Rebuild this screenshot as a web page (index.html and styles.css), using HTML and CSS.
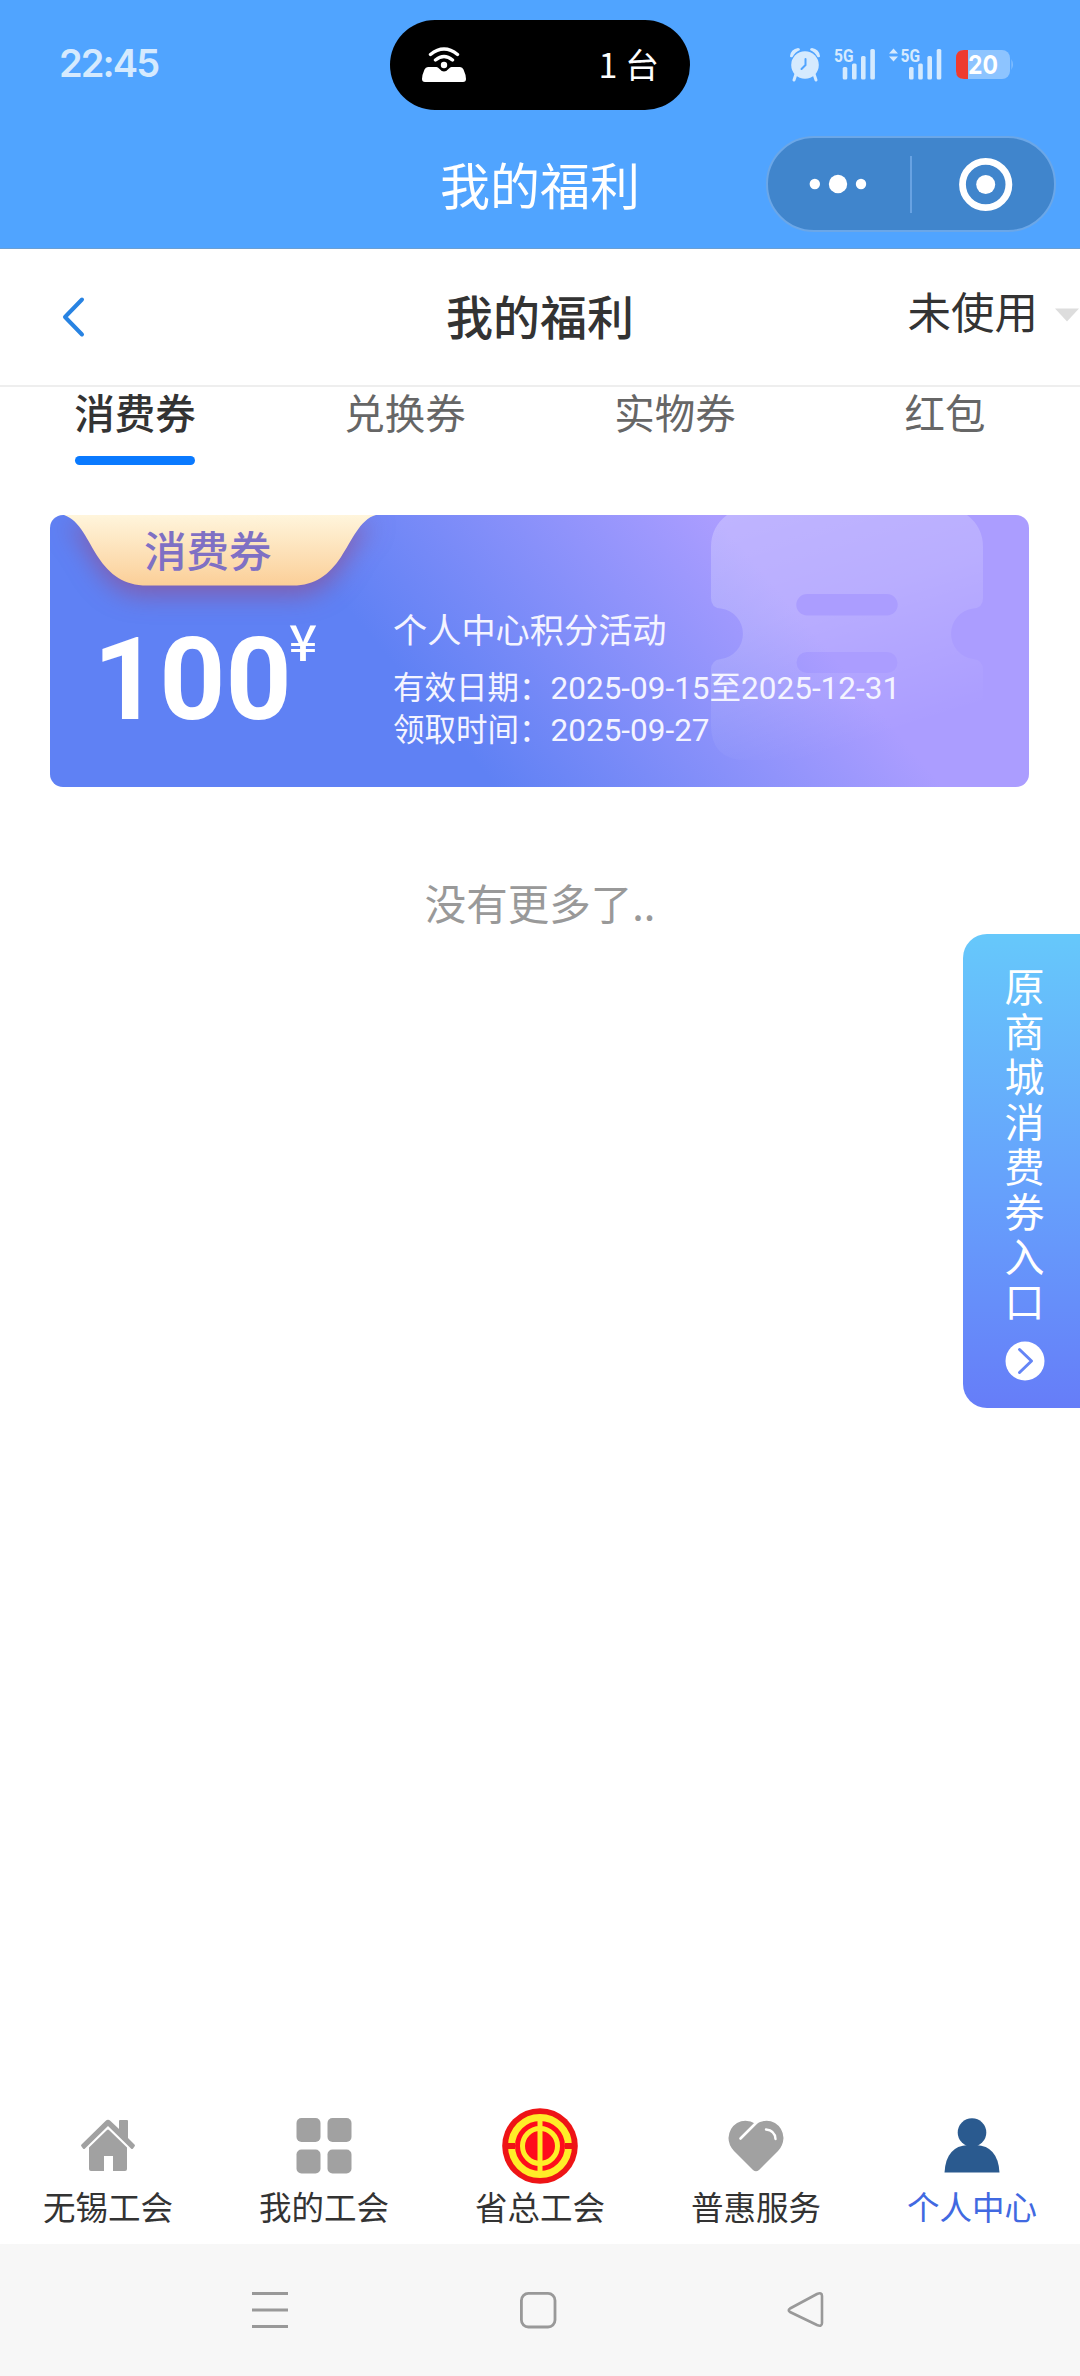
FILE: index.html
```html
<!DOCTYPE html>
<html lang="zh-CN">
<head>
<meta charset="UTF-8">
<title>我的福利</title>
<link rel="stylesheet" href="styles.css">
</head>
<body>
<div class="screen">
  <header class="app-header">
    <div class="status-bar">
      <span class="clock">22:45</span>
      <div class="island">
        <svg class="hotspot" width="46" height="36" viewBox="0 0 46 36" fill="none">
          <path d="M9.500 7.500Q23-3.500 36.500 7.500M14.500 13Q23 6 31.500 13" stroke="#fff" stroke-width="3.400" stroke-linecap="round"/>
          <path d="M7 20H15.500Q17 20 18 21.500Q23 27.500 28 21.500Q29 20 30.500 20H39Q41.500 20 42.500 22.500Q45 28 45 32Q45 35 42 35H4Q1 35 1 32Q1 28 3.500 22.500Q4.500 20 7 20Z" fill="#fff"/>
          <circle cx="23" cy="18" r="3.200" fill="#fff"/>
        </svg>
        <span class="island-text">1 台</span>
      </div>
      <svg class="status-icons" width="226" height="36" viewBox="0 0 226 36">
        <g fill="#d5eafe">
          <path d="M1 9Q2 2 9 1Q11 1 11 3Q6 5 3.500 10Q1 11 1 9ZM31 9Q30 2 23 1Q21 1 21 3Q26 5 28.500 10Q31 11 31 9Z"/>
          <circle cx="16" cy="18" r="13.800"/>
          <path d="M7 27L5 33M25 27L27 33" stroke="#d5eafe" stroke-width="3" stroke-linecap="round"/>
          <rect x="53.700" y="20" width="4.600" height="12.500" rx="1.500"/>
          <rect x="63" y="16.500" width="4.600" height="16" rx="1.500"/>
          <rect x="72" y="9" width="4.600" height="23.500" rx="1.500"/>
          <rect x="81.300" y="2" width="4.600" height="30.500" rx="1.500"/>
          <rect x="120" y="20" width="4.600" height="12.500" rx="1.500"/>
          <rect x="129.200" y="16.500" width="4.600" height="16" rx="1.500"/>
          <rect x="138.400" y="9" width="4.600" height="23.500" rx="1.500"/>
          <rect x="147.700" y="2" width="4.600" height="30.500" rx="1.500"/>
          <path d="M104.500 1.500L109 6.500H100ZM104.500 14.500L109 9.500H100Z"/>
          <text class="net" x="45" y="14.500" textLength="19.500" lengthAdjust="spacingAndGlyphs">5G</text>
          <text class="net" x="111.500" y="14.500" textLength="19.500" lengthAdjust="spacingAndGlyphs">5G</text>
        </g>
        <path d="M16.500 12V18L12.500 22" fill="none" stroke="#50a4ff" stroke-width="2" stroke-linecap="round"/>
        <rect x="167" y="3" width="54" height="29" rx="8" fill="#8dc4ff"/>
        <path d="M222.500 12Q225 17.500 222.500 23Z" fill="#8dc4ff"/>
        <path d="M179 3V32H175Q167 32 167 24V11Q167 3 175 3Z" fill="#ee3b2f"/>
        <text class="batt" x="179" y="26.500" textLength="30" lengthAdjust="spacingAndGlyphs">20</text>
      </svg>
    </div>
    <div class="title-bar">
      <div class="side"></div>
      <h1 class="app-title">我的福利</h1>
      <div class="side">
        <div class="capsule">
          <svg width="286" height="92" viewBox="0 0 286 92" fill="#fff">
            <circle cx="46.800" cy="46" r="5.200"/><circle cx="70" cy="46" r="9.200"/><circle cx="93" cy="46" r="5.200"/>
            <rect x="142" y="18" width="2" height="57" fill="#68a2e2"/>
            <circle cx="217.700" cy="46.500" r="23.200" fill="none" stroke="#fff" stroke-width="6.800"/>
            <circle cx="217.700" cy="46.500" r="9.500"/>
          </svg>
        </div>
      </div>
    </div>
  </header>

  <nav class="page-nav">
    <div class="nav-left">
      <svg width="24" height="44" viewBox="0 0 24 44" fill="none" stroke="#2883e2" stroke-width="4" stroke-linecap="round" stroke-linejoin="round"><path d="M20 4.500L3 22L20 39.500"/></svg>
    </div>
    <h2 class="page-title">我的福利</h2>
    <div class="filter">
      <span>未使用</span>
      <svg width="26" height="14" viewBox="0 0 26 14"><path d="M1 .5H25L13 13.500Z" fill="#ddd"/></svg>
    </div>
  </nav>

  <div class="tabs">
    <div class="tab active">消费券</div>
    <div class="tab">兑换券</div>
    <div class="tab">实物券</div>
    <div class="tab">红包</div>
  </div>

  <main class="content">
    <section class="coupon">
      <svg class="coupon-art" width="979" height="272" viewBox="0 0 979 272">
        <defs>
          <linearGradient id="ticket" x1="0" y1="0" x2=".35" y2="1">
            <stop offset="0" stop-color="#fff" stop-opacity=".24"/>
            <stop offset=".45" stop-color="#fff" stop-opacity=".17"/>
            <stop offset="1" stop-color="#fff" stop-opacity="0"/>
          </linearGradient>
          <linearGradient id="ribbon" x1="0" y1="0" x2="0" y2="1">
            <stop offset="0" stop-color="#fff5dc"/>
            <stop offset="1" stop-color="#fbcf98"/>
          </linearGradient>
        </defs>
        <path fill="url(#ticket)" fill-rule="evenodd" d="M677 0H917Q933 12 933 32V83Q933 93 923 93.500A25.500 25.500 0 0 0 923 144Q933 145 933 155V210Q933 245 898 245H696Q661 245 661 210V155Q661 145 671 144A25.500 25.500 0 0 0 671 93.500Q661 93 661 83V32Q661 12 677 0ZM757 79A10.500 10.500 0 0 0 757 100.500H837A10.500 10.500 0 0 0 837 79ZM757 137A10.500 10.500 0 0 0 757 158H837A10.500 10.500 0 0 0 837 137Z"/>
        <path class="ribbon" fill="url(#ribbon)" d="M14 0C30 5 38 27 48 42C60 60 74 70.500 97 70.500H243C265 70.500 279 60 291 42C301 27 310 4 326 0Z"/>
      </svg>
      <div class="coupon-value">
        <div class="coupon-kind">消费券</div>
        <div class="amount"><span class="number">100</span><span class="yen">¥</span></div>
      </div>
      <div class="coupon-info">
        <div class="coupon-name">个人中心积分活动</div>
        <div class="coupon-line">有效日期：<span class="date">2025-09-15</span>至<span class="date">2025-12-31</span></div>
        <div class="coupon-line">领取时间：<span class="date">2025-09-27</span></div>
      </div>
    </section>
    <p class="no-more">没有更多了..</p>
  </main>

  <a class="old-entry">
    <span class="entry-text">原商城消费券入口</span>
    <svg width="40" height="40" viewBox="0 0 40 40"><circle cx="20" cy="20" r="19.500" fill="#fff"/><path d="M14.500 8.500L26.500 20L14.500 31.500" fill="none" stroke="#6485f6" stroke-width="3" stroke-linecap="round" stroke-linejoin="round"/></svg>
  </a>

  <nav class="bottom-tabs">
    <div class="bottom-item">
      <svg width="76" height="76" viewBox="0 0 76 76" fill="#a1a1a1">
        <path d="M39 22L57 39.500V61Q57 63 55 63H43V48H34V63H21Q19 63 19 61V39.500L37 22Q38 21 39 22Z"/>
        <path d="M35.500 13Q38 10.500 40.500 13L49 21V13Q49 12 50 12H57Q58 12 58 13V30L64.500 36.500Q65.500 37.500 64.500 38.500L63 40.500Q62 41.500 61 40.500L38 18L15 40.500Q14 41.500 13 40.500L11.500 38.500Q10.500 37.500 11.500 36.500Z"/>
      </svg>
      <span>无锡工会</span>
    </div>
    <div class="bottom-item">
      <svg width="76" height="76" viewBox="0 0 76 76" fill="#a1a1a1">
        <rect x="10.500" y="10" width="24" height="24" rx="5"/><rect x="41.500" y="10" width="24" height="24" rx="5"/>
        <rect x="10.500" y="41.500" width="24" height="24" rx="5"/><rect x="41.500" y="41.500" width="24" height="24" rx="5"/>
      </svg>
      <span>我的工会</span>
    </div>
    <div class="bottom-item">
      <svg width="76" height="76" viewBox="0 0 76 76">
        <circle cx="38" cy="38" r="37.800" fill="#ee1416"/>
        <circle cx="38" cy="38" r="28.500" fill="#ff0c1c" stroke="#ffee28" stroke-width="7"/>
        <path d="M4 38H13M63 38H72" stroke="#ee1416" stroke-width="6"/>
        <circle cx="38" cy="38" r="17.500" fill="none" stroke="#ffee28" stroke-width="5"/>
        <path d="M38 8V68" stroke="#ffee28" stroke-width="5"/>
      </svg>
      <span>省总工会</span>
    </div>
    <div class="bottom-item">
      <svg width="76" height="76" viewBox="0 0 76 76">
        <path d="M38 16Q48 10 57 15Q65 20 65.500 30Q65 38 60 43L41 62Q38 64.500 35 62L16 43Q10.500 37 10.500 30Q11 20 19 15Q28 10 38 16Z" fill="#a1a1a1"/>
        <path d="M38.500 14.500L22.500 30.500" stroke="#fff" stroke-width="2.600" stroke-linecap="round"/>
        <path d="M48 21.500Q57 22.500 57.500 31" fill="none" stroke="#fff" stroke-width="2.400" stroke-linecap="round"/>
      </svg>
      <span>普惠服务</span>
    </div>
    <div class="bottom-item current">
      <svg width="76" height="76" viewBox="0 0 76 76" fill="#2a5a8f">
        <circle cx="38" cy="24.500" r="14.300"/>
        <path d="M10.500 64.500Q12 38 34 37H42Q64 38 65.500 64.500Z"/>
      </svg>
      <span>个人中心</span>
    </div>
  </nav>

  <div class="system-bar">
    <svg width="40" height="40" viewBox="0 0 40 40" stroke="#999" stroke-width="3"><path d="M2 3.500H38M2 20H38M2 36.500H38"/></svg>
    <svg width="40" height="40" viewBox="0 0 40 40" fill="none" stroke="#999" stroke-width="2.800"><rect x="3.400" y="3.400" width="33.600" height="33.600" rx="7"/></svg>
    <svg width="40" height="40" viewBox="0 0 40 40" fill="none" stroke="#999" stroke-width="2.600" stroke-linejoin="round"><path d="M4 18.500L31 4Q36 2 36 6V33Q36 37 31 35L4 22Q1.500 20 4 18.500Z"/></svg>
  </div>
</div>
</body>
</html>
```
FILE: styles.css
```css
* {
  box-sizing: border-box;
  margin: 0;
  padding: 0;
}

body {
  background: #fff;
  font-family: "Noto Sans CJK SC", "Noto Sans", sans-serif;
  color: #333;
}

svg {
  display: block;
  flex: none;
}

.screen {
  position: relative;
  display: flex;
  flex-direction: column;
  width: 1080px;
  height: 2376px;
  overflow: hidden;
}

.app-header {
  height: 249px;
  background: #50a4ff;
  border-bottom: 1px solid #6a9fd4;
}

.status-bar {
  display: grid;
  grid-template-columns: 1fr 300px 1fr;
  align-items: center;
  height: 130px;
}

.clock {
  padding: 0 0 4px 59px;
  font: 600 38px/44px Inter, sans-serif;
  letter-spacing: -1.900px;
  color: #d5eafe;
}

.island {
  display: flex;
  align-items: center;
  justify-content: space-between;
  height: 90px;
  padding: 0 31px;
  border-radius: 45px;
  background: #000;
}

.island-text {
  padding-bottom: 2px;
  font-size: 34px;
  line-height: 50px;
  color: #fff;
}

.status-icons {
  margin-left: 99px;
}

.net {
  font: 700 18px Roboto, sans-serif;
}

.batt {
  font: 700 26px Inter, sans-serif;
  fill: #fff;
}

.title-bar {
  display: grid;
  grid-template-columns: 1fr auto 1fr;
  align-items: center;
  height: 108px;
}

.side {
  display: flex;
  justify-content: flex-end;
  padding-right: 24px;
}

.app-title {
  padding-bottom: 3px;
  font-size: 50px;
  font-weight: 400;
  line-height: 72px;
  color: #fff;
}

.capsule {
  border: 2px solid #6ba7e8;
  border-radius: 48px;
  background: #4085cc;
}

.page-nav {
  display: grid;
  grid-template-columns: 1fr auto 1fr;
  align-items: center;
  height: 138px;
  border-bottom: 2px solid #eee;
}

.nav-left {
  padding-left: 62px;
}

.page-title {
  padding-bottom: 4px;
  font-size: 47px;
  font-weight: 500;
  line-height: 68px;
}

.filter {
  display: flex;
  align-items: center;
  justify-content: flex-end;
  gap: 16px;
  padding-bottom: 5px;
  font-size: 43.500px;
  line-height: 62px;
}

.filter span {
  padding-bottom: 7px;
}

.tabs {
  display: grid;
  grid-template-columns: repeat(4, 1fr);
  height: 128px;
}

.tab {
  display: flex;
  flex-direction: column;
  align-items: center;
  font-size: 40.500px;
  line-height: 50px;
  color: #666;
}

.tab.active {
  color: #333;
  font-weight: 500;
}

.tab.active::after {
  content: "";
  width: 120px;
  height: 9px;
  margin-top: 19px;
  border-radius: 5px;
  background: #0a7aff;
}

.content {
  flex: 1;
}

.coupon {
  position: relative;
  display: grid;
  grid-template-columns: 343px 1fr;
  width: 979px;
  height: 272px;
  margin-left: 50px;
  border-radius: 13px;
  overflow: hidden;
  background: linear-gradient(50deg, #5f81f4 37%, #ab9dff 74%);
}

.coupon-art {
  position: absolute;
  inset: 0;
}

.ribbon {
  filter: drop-shadow(0 10px 12px rgba(160, 60, 110, 0.5));
}

.coupon-value,
.coupon-info {
  position: relative;
}

.coupon-kind {
  padding-left: 94px;
  font-size: 42.500px;
  line-height: 67px;
  font-weight: 500;
  color: #7f70c4;
}

.amount {
  display: flex;
  align-items: flex-start;
  padding: 22px 0 0 43px;
  color: #fff;
}

.number {
  padding-top: 6px;
  font: 700 115.500px/140px Roboto, sans-serif;
}

.yen {
  margin-left: -3px;
  font-size: 50px;
  line-height: 70px;
  font-weight: 500;
}

.coupon-info {
  padding-top: 88px;
  color: #f4f4ff;
}

.coupon-name {
  margin-bottom: 11px;
  font-size: 34.200px;
  line-height: 50px;
}

.coupon-line {
  font-size: 31.500px;
  line-height: 42px;
  white-space: nowrap;
}

.date {
  font-family: Roboto, sans-serif;
  line-height: 0;
}

.no-more {
  margin-top: 85px;
  font-size: 41.500px;
  line-height: 60px;
  text-align: center;
  color: #999;
}

.old-entry {
  position: absolute;
  top: 934px;
  right: 0;
  display: flex;
  flex-direction: column;
  align-items: center;
  gap: 18px;
  width: 117px;
  height: 474px;
  padding: 29px 0 0 6px;
  border-radius: 24px 0 0 24px;
  background: linear-gradient(#66c8fb, #66a0fc 55%, #667df8);
}

.entry-text {
  width: 40px;
  font-size: 40px;
  line-height: 45px;
  word-break: break-all;
  color: #fff;
}

.bottom-tabs {
  display: grid;
  grid-template-columns: repeat(5, 1fr);
  height: 136px;
}

.bottom-item {
  display: flex;
  flex-direction: column;
  align-items: center;
  font-size: 32.500px;
  line-height: 44px;
}

.current {
  color: #4169e1;
}

.system-bar {
  display: flex;
  gap: 228px;
  height: 132px;
  padding: 46px 0 0 250px;
  background: #f7f7f7;
}
```
